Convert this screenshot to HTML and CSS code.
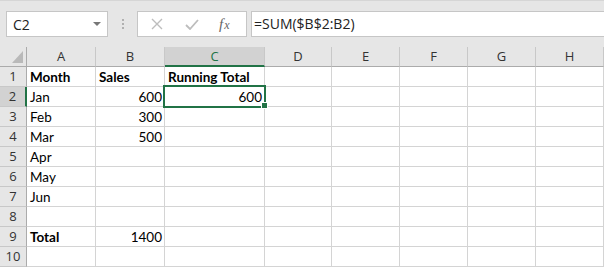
FILE: index.html
```html
<!DOCTYPE html>
<html lang="en">
<head>
    <meta charset="UTF-8">
    <title>Running Total</title>
    <link rel="stylesheet" href="styles.css">
</head>
<body>
    <div class="toolbar">
        <div class="namebox">
            <span>C2</span>
            <span class="arrow"></span>
        </div>
        <div class="grip"><i></i><i></i><i></i></div>
        <div class="fbuttons">
            <svg width="12" height="12" viewBox="0 0 12 12"><path d="M1 1 L11 11 M11 1 L1 11" stroke="#bdbdbd" stroke-width="1.4" fill="none"/></svg>
            <svg width="14" height="11" viewBox="0 0 14 11"><path d="M1 6 L5 10 L13 1" stroke="#bdbdbd" stroke-width="1.8" fill="none"/></svg>
            <span class="fx"><i>f</i><i>x</i></span>
        </div>
        <div class="formula">=SUM($B$2:B2)</div>
    </div>

    <div class="sheet">
        <div class="hd corner"><span class="tri"></span></div>
        <div class="hd">A</div>
        <div class="hd">B</div>
        <div class="hd active-col">C</div>
        <div class="hd">D</div>
        <div class="hd">E</div>
        <div class="hd">F</div>
        <div class="hd">G</div>
        <div class="hd">H</div>

        <div class="rh">1</div>
        <div class="c b">Month</div>
        <div class="c b">Sales</div>
        <div class="c b">Running Total</div>
        <div class="c"></div><div class="c"></div><div class="c"></div><div class="c"></div><div class="c"></div>

        <div class="rh active-row">2</div>
        <div class="c">Jan</div>
        <div class="c n">600</div>
        <div class="c n selected">600<span class="handle"></span></div>
        <div class="c"></div><div class="c"></div><div class="c"></div><div class="c"></div><div class="c"></div>

        <div class="rh">3</div>
        <div class="c">Feb</div>
        <div class="c n">300</div>
        <div class="c"></div><div class="c"></div><div class="c"></div><div class="c"></div><div class="c"></div><div class="c"></div>

        <div class="rh">4</div>
        <div class="c">Mar</div>
        <div class="c n">500</div>
        <div class="c"></div><div class="c"></div><div class="c"></div><div class="c"></div><div class="c"></div><div class="c"></div>

        <div class="rh">5</div>
        <div class="c">Apr</div>
        <div class="c"></div><div class="c"></div><div class="c"></div><div class="c"></div><div class="c"></div><div class="c"></div><div class="c"></div>

        <div class="rh">6</div>
        <div class="c">May</div>
        <div class="c"></div><div class="c"></div><div class="c"></div><div class="c"></div><div class="c"></div><div class="c"></div><div class="c"></div>

        <div class="rh">7</div>
        <div class="c">Jun</div>
        <div class="c"></div><div class="c"></div><div class="c"></div><div class="c"></div><div class="c"></div><div class="c"></div><div class="c"></div>

        <div class="rh">8</div>
        <div class="c"></div><div class="c"></div><div class="c"></div><div class="c"></div><div class="c"></div><div class="c"></div><div class="c"></div><div class="c"></div>

        <div class="rh">9</div>
        <div class="c b">Total</div>
        <div class="c n">1400</div>
        <div class="c"></div><div class="c"></div><div class="c"></div><div class="c"></div><div class="c"></div><div class="c"></div>

        <div class="rh">10</div>
        <div class="c"></div><div class="c"></div><div class="c"></div><div class="c"></div><div class="c"></div><div class="c"></div><div class="c"></div><div class="c"></div>
    </div>
</body>
</html>
```

FILE: styles.css
```css
body {
    margin: 0;
    padding: 0;
    background-color: #e6e6e6;
    font-family: "Open Sans", sans-serif;
    overflow: hidden;
}
.toolbar {
    display: flex;
    align-items: center;
    height: 47px;
    padding: 10px 0 10px 6px;
    box-sizing: border-box;
    border-top: 1px solid #d6d6d6;
}
.namebox {
    width: 102px;
    height: 26px;
    box-sizing: border-box;
    background-color: #fff;
    border: 1px solid #c6c6c6;
    display: flex;
    align-items: center;
    justify-content: space-between;
    padding: 0 6px 0 6px;
    font-size: 14px;
    color: #222;
}
.arrow {
    width: 0;
    height: 0;
    border-left: 4px solid transparent;
    border-right: 4px solid transparent;
    border-top: 4px solid #777;
}
.grip {
    display: flex;
    flex-direction: column;
    gap: 2px;
    margin: 0 13px 0 14px;
}
.grip i {
    width: 2px;
    height: 2px;
    background-color: #b0b0b0;
}
.fbuttons {
    width: 110px;
    height: 26px;
    box-sizing: border-box;
    background-color: #fff;
    border: 1px solid #c6c6c6;
    display: flex;
    align-items: center;
    padding-left: 13px;
    gap: 22px;
}
.fx {
    font-family: "Liberation Serif", serif;
    color: #666;
    font-size: 15px;
    margin-left: -2px;
}
.fx i + i {
    font-size: 12px;
    margin-left: 1px;
}
.formula {
    flex: 1;
    height: 26px;
    box-sizing: border-box;
    margin-left: 4px;
    background-color: #fff;
    border: 1px solid #c6c6c6;
    border-right: none;
    font-size: 14px;
    line-height: 24px;
    padding-left: 2px;
    color: #222;
}
.sheet {
    display: grid;
    grid-template-columns: 27px 69px 69px 100px 67px 68px 68px 68px 1fr;
    grid-auto-rows: 20px;
    background-color: #fff;
}
.hd {
    background-color: #e6e6e6;
    border-right: 1px solid #c8c8c8;
    border-bottom: 1px solid #ababab;
    font-size: 13px;
    line-height: 19px;
    text-align: center;
    color: #333;
}
.corner {
    position: relative;
    border-right: 1px solid #ababab;
}
.tri {
    position: absolute;
    right: 3px;
    bottom: 3px;
    width: 0;
    height: 0;
    border-left: 11px solid transparent;
    border-bottom: 12px solid #b9b9b9;
}
.active-col {
    background-color: #d2d2d2;
    color: #217346;
    border-bottom: 2px solid #217346;
    line-height: 18px;
}
.rh {
    background-color: #e6e6e6;
    border-right: 1px solid #ababab;
    border-bottom: 1px solid #c8c8c8;
    font-size: 13px;
    line-height: 19px;
    text-align: center;
    color: #333;
}
.active-row {
    background-color: #d2d2d2;
    border-right: 2px solid #217346;
}
.c {
    border-right: 1px solid #d4d4d4;
    border-bottom: 1px solid #d4d4d4;
    font-family: Lato, sans-serif;
    font-size: 13.5px;
    line-height: 20px;
    padding: 0 2px 0 3px;
    color: #000;
    white-space: nowrap;
}
.b {
    font-weight: bold;
}
.n {
    text-align: right;
}
.selected {
    position: relative;
}
.selected::after {
    content: "";
    position: absolute;
    left: -2px;
    top: -2px;
    width: 103px;
    height: 23px;
    box-sizing: border-box;
    border: 2px solid #217346;
}
.handle {
    position: absolute;
    right: -3px;
    bottom: -2px;
    width: 5px;
    height: 5px;
    background-color: #217346;
    outline: 1px solid #fff;
    z-index: 1;
}
```
